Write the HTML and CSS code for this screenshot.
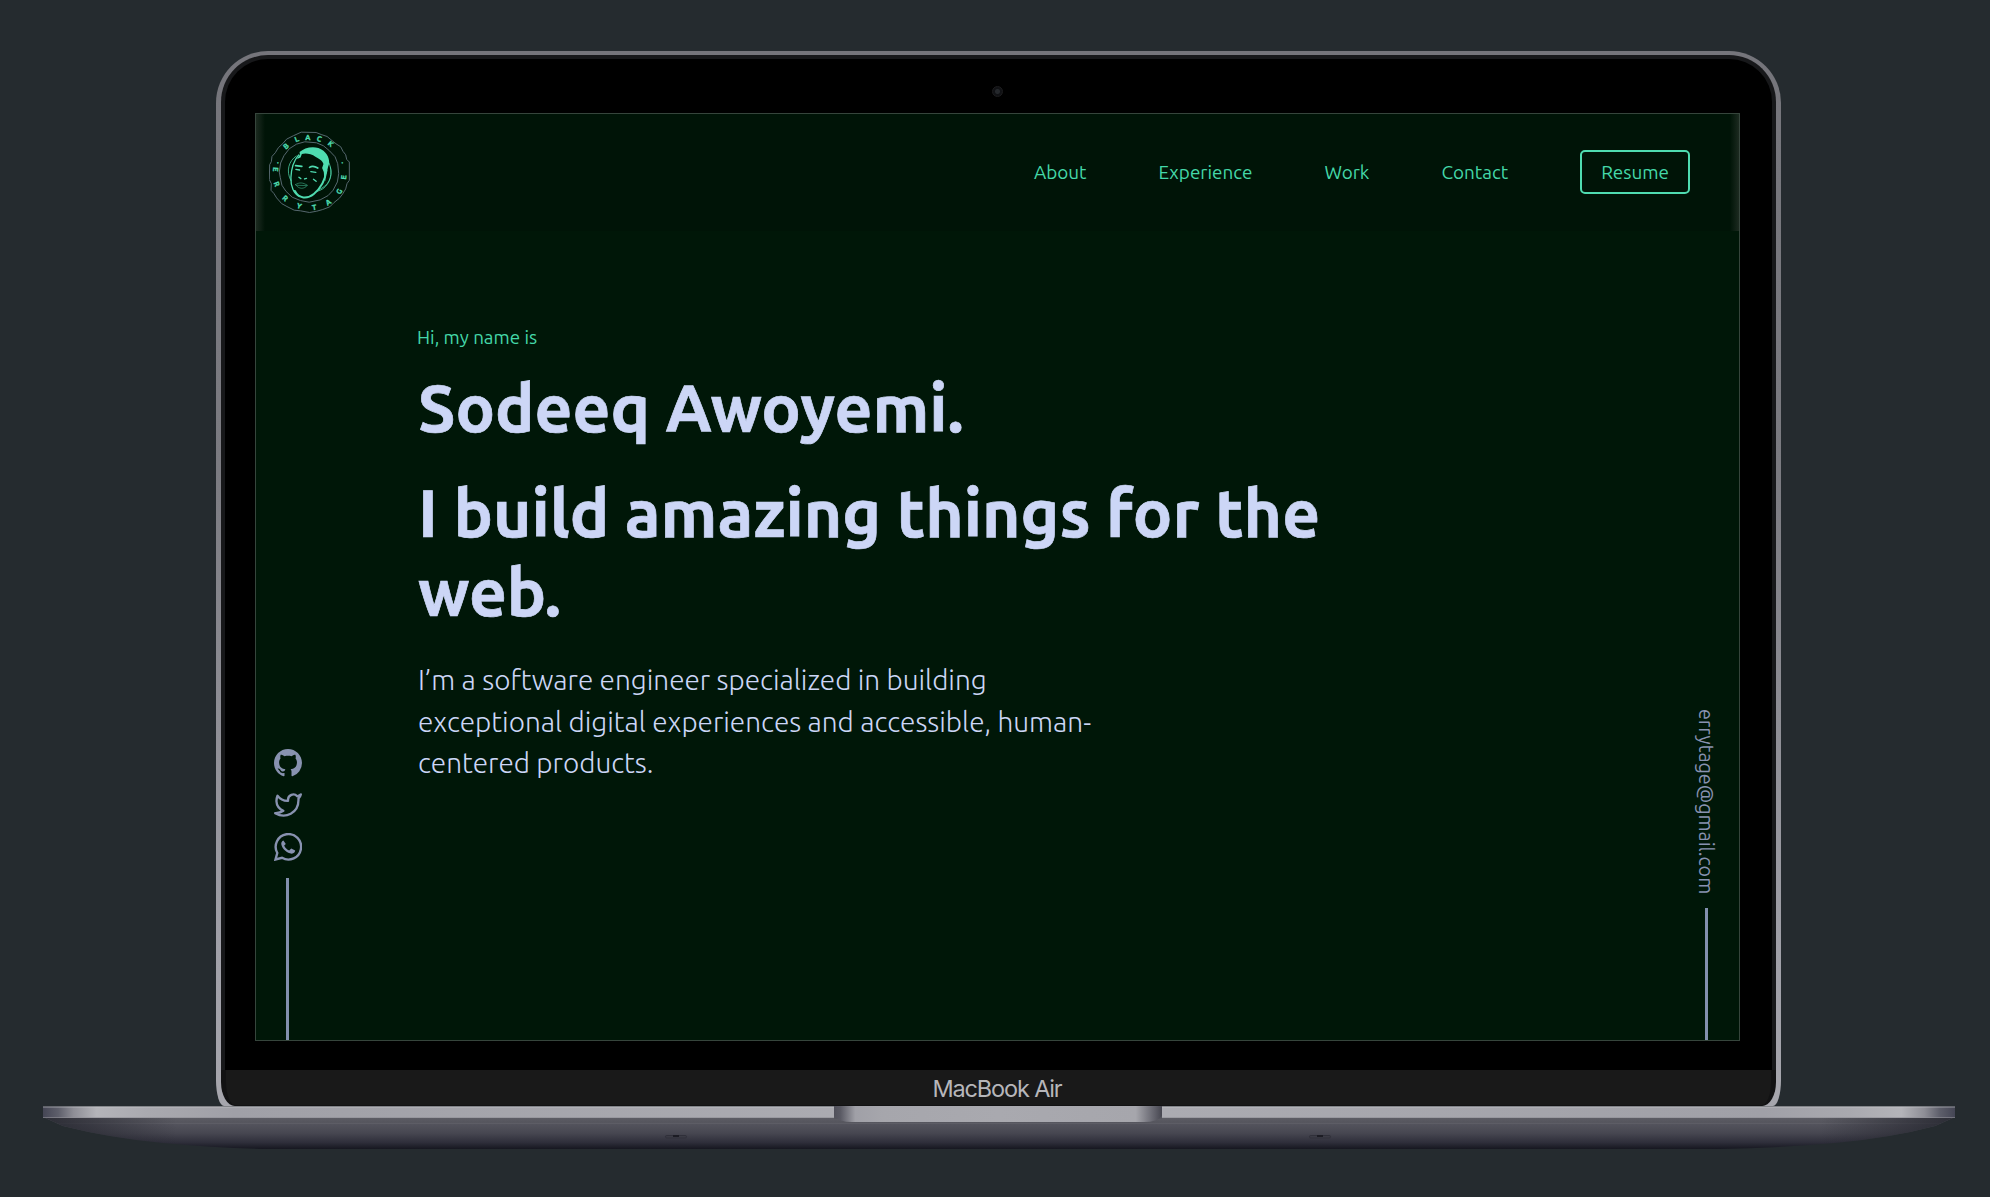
FILE: index.html
```html
<!DOCTYPE html>
<html lang="en">
<head>
<meta charset="utf-8">
<title>Sodeeq Awoyemi</title>
<link rel="stylesheet" href="styles.css">
</head>
<body>
<div class="laptop">
  <div class="lid">
    <div class="bezel">
      <div class="camera"></div>
      <div class="screen">
        <header class="header">
          <svg class="logo" viewBox="42 32 244 246" width="81" height="82">
            <g fill="none" stroke="#56686f" stroke-width="3">
              <path d="M139 35L184 36L199 42L217 48L229 58L244 70L258 79L265 93L273 103L276 117L284 125V180L277 190L273 206L264 221L254 234L238 247L225 260L204 268L186 273L164 277L137 272L118 270L96 259L80 250L65 233L57 220L48 210L49 190L43 178L44 133L49 124L51 108L61 97L70 82L84 69L95 56L115 46Z"/>
              <path d="M150 64L185 67L206 76L224 91L241 109L249 130L252 160L248 185L235 210L220 226L196 239L163 246L137 241L112 231L93 213L81 195L76 172L73 155L77 128L87 106L103 85L125 71Z"/>
            </g>
            <g class="logo-letters">
              <text transform="translate(92 76) rotate(-40)">B</text>
              <text transform="translate(125 55) rotate(-21)">L</text>
              <text transform="translate(159 49)">A</text>
              <text transform="translate(194 54) rotate(18)">C</text>
              <text transform="translate(229 69) rotate(39)">K</text>
              <text transform="translate(265 127) rotate(75)">·</text>
              <text transform="translate(266 171) rotate(-84)">E</text>
              <text transform="translate(252 213) rotate(-58)">G</text>
              <text transform="translate(220 245) rotate(-33)">A</text>
              <text transform="translate(178 260) rotate(-9)">T</text>
              <text transform="translate(133 256) rotate(16)">Y</text>
              <text transform="translate(92 233) rotate(42)">R</text>
              <text transform="translate(67 191) rotate(68)">R</text>
              <text transform="translate(63 147) rotate(94)">E</text>
              <text transform="translate(66 127) rotate(-75)">·</text>
            </g>
            <g fill="none" stroke="#4fdcb0" stroke-linecap="round">
              <path stroke-width="3" opacity=".75" d="M124 107C102 121 92 152 108 181M223 128C238 164 222 207 184 214M227 140C236 170 220 198 192 208"/>
              <path stroke-width="4" d="M131 104C118 119 109 145 108 172C107 199 117 222 134 229"/>
              <path stroke-width="6" d="M120 212C132 236 157 237 177 221C197 205 211 180 215 151"/>
              <path stroke-width="5" d="M122 136L141 138M164 141C173 135 181 138 189 143"/>
              <path stroke-width="4" d="M123 147L134 149M168 154L183 156M132 171L138 175M149 176L155 174M176 177L184 183"/>
              <path stroke-width="2" opacity=".7" d="M122 193C134 185 144 187 158 195C148 207 132 208 122 193M126 195L155 196M209 164L212 180"/>
            </g>
            <path fill="#4fdcb0" d="M126 116L135 102L134 95C150 80 184 73 206 91C221 103 228 125 220 139C218 151 213 165 209 177L207 155L202 143L206 131C203 120 194 117 183 110C168 99 151 98 141 101L137 111Z"/>
          </svg>
          <nav class="nav">
            <a>About</a><a>Experience</a><a>Work</a><a>Contact</a><a class="resume">Resume</a>
          </nav>
        </header>
        <div class="page">
          <aside class="side">
            <svg width="28" height="28" viewBox="0 0 16 16" fill="#8892b0"><path d="M8 0C3.58 0 0 3.58 0 8c0 3.54 2.29 6.53 5.47 7.59.4.07.55-.17.55-.38 0-.19-.01-.82-.01-1.49-2.01.37-2.53-.49-2.69-.94-.09-.23-.48-.94-.82-1.13-.28-.15-.68-.52-.01-.53.63-.01 1.08.58 1.23.82.72 1.21 1.87.87 2.33.66.07-.52.28-.87.51-1.07-1.78-.2-3.64-.89-3.64-3.95 0-.87.31-1.59.82-2.15-.08-.2-.36-1.02.08-2.12 0 0 .67-.21 2.2.82.64-.18 1.32-.27 2-.27s1.36.09 2 .27c1.53-1.04 2.2-.82 2.2-.82.44 1.1.16 1.92.08 2.12.51.56.82 1.27.82 2.15 0 3.07-1.87 3.75-3.65 3.95.29.25.54.73.54 1.48 0 1.07-.01 1.93-.01 2.2 0 .21.15.46.55.38A8.01 8.01 0 0 0 16 8c0-4.42-3.58-8-8-8z"/></svg>
            <svg width="28" height="28" viewBox="0 0 24 24" fill="none" stroke="#8892b0" stroke-width="2" stroke-linecap="round" stroke-linejoin="round"><path d="M23 3a10.9 10.9 0 0 1-3.14 1.53 4.48 4.48 0 0 0-7.86 3v1A10.66 10.66 0 0 1 3 4s-4 9 5 13a11.64 11.64 0 0 1-7 2c9 5 20 0 20-11.5a4.5 4.5 0 0 0-.08-.83A7.72 7.72 0 0 0 23 3z"/></svg>
            <svg width="28" height="28" viewBox="0 0 28 28" fill="none" stroke="#8892b0" stroke-width="2.4"><path d="M1.5 26.5L3.3 20A12.7 12.7 0 1 1 8 24.8Z"/><path fill="#8892b0" stroke="none" d="M9.4 7.6C8 8.2 7 9.6 7.3 11.3C8.2 16 13 20.4 17.8 20.7C19.6 20.6 21 19.4 21.2 17.6L17.2 15.6L15.2 17.6C13 16.8 11.1 14.9 10.2 12.6L11.8 11Z"/></svg>
            <span class="rule"></span>
          </aside>
          <main class="hero">
            <p class="greeting">Hi, my name is</p>
            <h1>Sodeeq Awoyemi.</h1>
            <h2>I build amazing things for the web.</h2>
            <p class="intro">I’m a software engineer specialized in building exceptional digital experiences and accessible, human-centered products.</p>
          </main>
          <aside class="contact">
            <span class="email">errytage@gmail.com</span>
            <span class="rule"></span>
          </aside>
        </div>
      </div>
    </div>
    <div class="chin">MacBook Air</div>
  </div>
  <svg class="base" width="1912" height="44" viewBox="43 1106 1912 44">
    <defs>
      <linearGradient id="edge" x1="0" x2="1">
        <stop offset="0" stop-color="#454655"/><stop offset=".008" stop-color="#5e5f6b"/><stop offset=".016" stop-color="#8e8e96"/><stop offset=".028" stop-color="#b4b4b9"/><stop offset=".055" stop-color="#a9a9af"/><stop offset=".1" stop-color="#a0a0a7"/>
        <stop offset=".5" stop-color="#aeaeb4"/>
        <stop offset=".9" stop-color="#a0a0a7"/><stop offset=".945" stop-color="#a9a9af"/><stop offset=".972" stop-color="#b4b4b9"/><stop offset=".984" stop-color="#8e8e96"/><stop offset=".992" stop-color="#5e5f6b"/><stop offset="1" stop-color="#454655"/>
      </linearGradient>
      <linearGradient id="belly" x1="0" x2="0" y1="0" y2="1">
        <stop offset="0" stop-color="#5e5e66"/><stop offset=".17" stop-color="#55555d"/><stop offset=".19" stop-color="#62626a"/><stop offset=".23" stop-color="#53535c"/><stop offset=".5" stop-color="#474751"/><stop offset=".8" stop-color="#2e2e3a"/><stop offset="1" stop-color="#161720"/>
      </linearGradient>
      <linearGradient id="ends" x1="0" x2="1">
        <stop offset="0" stop-color="#20212a" stop-opacity=".8"/><stop offset=".07" stop-color="#20212a" stop-opacity="0"/><stop offset=".93" stop-color="#20212a" stop-opacity="0"/><stop offset="1" stop-color="#20212a" stop-opacity=".8"/>
      </linearGradient>
      <linearGradient id="notch" x1="0" x2="1">
        <stop offset="0" stop-color="#50505a"/><stop offset=".02" stop-color="#5a5a64"/><stop offset=".065" stop-color="#a0a0a7"/><stop offset=".15" stop-color="#a6a6ac"/><stop offset=".5" stop-color="#a9a9af"/><stop offset=".92" stop-color="#a6a6ac"/><stop offset=".965" stop-color="#707079"/><stop offset="1" stop-color="#464650"/>
      </linearGradient>
    </defs>
    <path fill="url(#belly)" d="M43 1117L63 1126Q110 1138 163 1143T265 1149H1720Q1780 1148 1835 1143T1935 1126L1955 1117Z"/>
    <path fill="url(#ends)" d="M43 1117L63 1126Q110 1138 163 1143T265 1149H1720Q1780 1148 1835 1143T1935 1126L1955 1117Z"/>
    <rect x="43" y="1106.5" width="1912" height="11.5" fill="url(#edge)"/>
    <path d="M43 1107H1955" stroke="#c9c9cd" stroke-width="1" opacity=".6"/>
    <path d="M43 1117.5H1955" stroke="#8f8f96" stroke-width="1" opacity=".6"/>
    <path fill="#55555d" d="M834 1106H1162V1119H834Z"/>
    <path fill="url(#notch)" d="M834 1106H1162V1116Q1157 1122 1144 1122H852Q839 1122 834 1116Z"/>
    <g fill="#3b3b45" stroke="#30303a"><rect x="665.500" y="1135.500" width="21" height="2.500" rx="1.250"/><rect x="1309.500" y="1135.500" width="21" height="2.500" rx="1.250"/></g>
    <g fill="#1c1c24"><rect x="673" y="1135" width="6" height="2"/><rect x="1317" y="1135" width="6" height="2"/></g>
  </svg>
</div>
</body>
</html>
```
FILE: styles.css
```css
* { box-sizing: border-box; }
body {
  margin: 0;
  height: 1197px;
  overflow: hidden;
  background: #252b2f;
  font-family: Ubuntu, "Noto Sans", sans-serif;
}
h1, h2, p { margin: 0; }
.laptop {
  display: flex;
  flex-direction: column;
  align-items: center;
  padding-top: 51px;
  width: 1997px;
}
.lid {
  display: flex;
  flex-direction: column;
  width: 1565px;
  height: 1055px;
  padding: 4px 5px 0;
  border-radius: 52px 52px 8px 8px / 52px 52px 26px 26px;
  background: linear-gradient(#75757b, #7b7b81 40%, #a0a0a8 85%, #a6a6ad);
}
.bezel {
  display: flex;
  flex-direction: column;
  align-items: center;
  height: 1015px;
  padding-right: 2px;
  border: 4px solid #17181a;
  border-bottom: 0;
  border-radius: 47px 47px 0 0;
  background: #000;
}
.camera {
  width: 11px;
  height: 11px;
  margin: 27px 0 16px;
  border-radius: 50%;
  border: 1px solid #1d1d1f;
  background: radial-gradient(#25282c 0 2px, #101114 3px);
}
.screen {
  display: flex;
  flex-direction: column;
  flex: none;
  width: 1485px;
  height: 928px;
  border: 1px solid #36453c;
  background: #001708;
}
.header {
  display: flex;
  align-items: center;
  justify-content: space-between;
  height: 117px;
  padding: 0 49px 2px 13px;
  background:
    linear-gradient(90deg, #1c2a20, rgba(28, 42, 32, 0) 9px, rgba(28, 42, 32, 0) calc(100% - 9px), #1c2a20),
    #001407;
}
.logo-letters text {
  font: 700 22px Ubuntu, sans-serif;
  fill: #4fdcb0;
  stroke: #4fdcb0;
  stroke-width: 1px;
  text-anchor: middle;
  dominant-baseline: central;
}
.nav {
  display: flex;
  align-items: center;
  gap: 72px;
  font-size: 18.900px;
  line-height: 22px;
  color: #44d8a9;
}
.resume {
  padding: 9px 19px;
  border: 2px solid #4fdcb0;
  border-radius: 5px;
}
.page {
  display: flex;
  flex: 1;
  justify-content: space-between;
}
.side {
  display: flex;
  flex-direction: column;
  align-items: center;
  justify-content: flex-end;
  gap: 14px;
  width: 63px;
}
.rule {
  width: 3px;
  background: #8390ae;
}
.side .rule {
  height: 162px;
  margin-top: 3px;
}
.hero {
  width: 960px;
  margin: 95px auto 0 98px;
  color: #ccd6f6;
}
.greeting {
  margin-bottom: 20px;
  font-size: 18.800px;
  line-height: 22px;
  color: #44d8a9;
}
h1, h2 {
  font-size: 65.900px;
  font-weight: 700;
  line-height: 79px;
  -webkit-text-stroke: .7px #ccd6f6;
}
h1 { margin: 0 0 26px 1px; }
h2 { margin: 0 0 28px 1px; }
.intro {
  width: 710px;
  margin-left: 1px;
  font-size: 28px;
  font-weight: 300;
  line-height: 41.600px;
}
.contact {
  display: flex;
  flex-direction: column;
  align-items: center;
  justify-content: flex-end;
  gap: 14px;
  width: 66px;
}
.contact .rule { height: 132px; }
.email {
  writing-mode: vertical-rl;
  font-size: 19.700px;
  line-height: 24px;
  color: #8892b0;
}
.chin {
  display: flex;
  align-items: center;
  justify-content: center;
  height: 36px;
  padding: 2px 3px 0 0;
  border: 4px solid #121213;
  border-width: 0 5px 1px;
  border-radius: 0 0 14px 14px / 0 0 24px 24px;
  background: #191919;
  font: 23.500px Inter, sans-serif;
  letter-spacing: -1.150px;
  color: #b6b6ba;
}
.base { flex: none; display: block; }
```
